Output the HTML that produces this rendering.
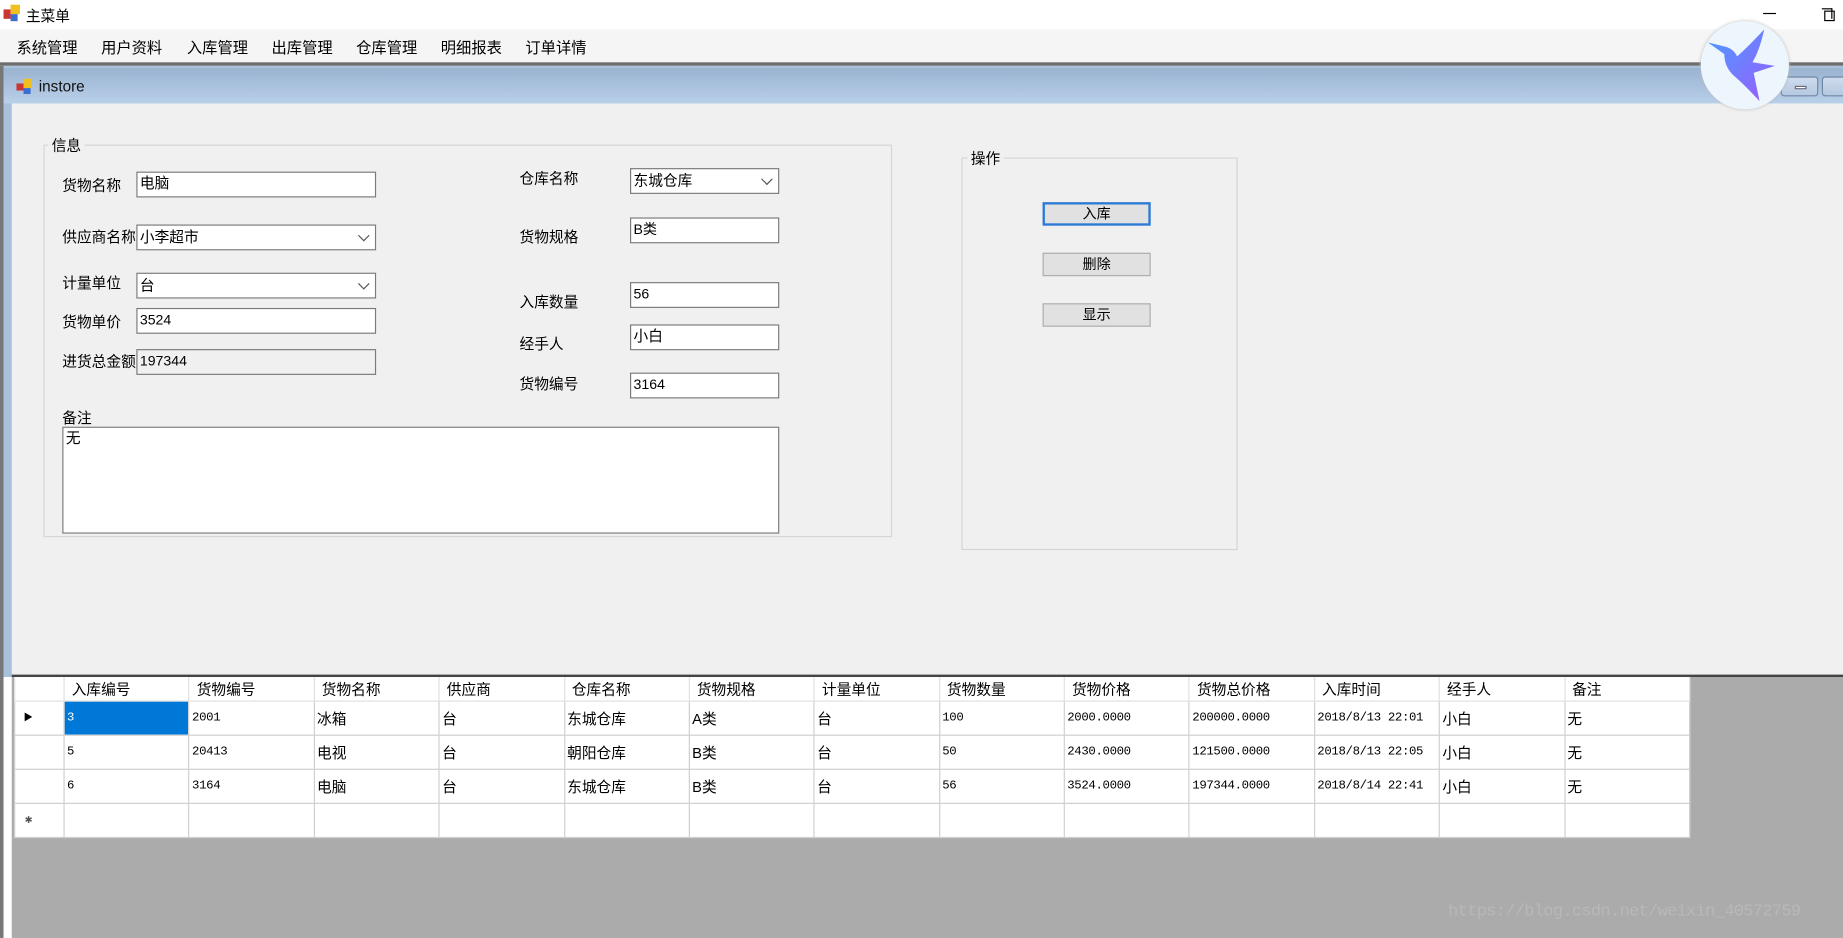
<!DOCTYPE html>
<html><head><meta charset="utf-8"><style>
*{margin:0;padding:0;box-sizing:border-box}
html,body{width:1843px;height:938px;overflow:hidden;background:#fff}
#w{position:absolute;left:0;top:0;width:1568px;height:798px;transform:scale(1.17538);transform-origin:0 0;font-family:"Liberation Sans","Noto Sans CJK SC",sans-serif;font-size:12.5px;color:#000}
.a{position:absolute;white-space:nowrap}
.tb{position:absolute;background:#fff;border:1px solid #7a7a7a;height:22px;font-size:12px;padding:1px 2px;line-height:17px}
.cb{position:absolute;background:#fff;border:1px solid #7a7a7a;height:22px;font-size:12.5px;padding:1px 2px;line-height:18px}
.cb:after{content:"";position:absolute;right:6px;top:5px;width:6px;height:6px;border-right:1px solid #555;border-bottom:1px solid #555;transform:rotate(45deg)}
.gb{position:absolute;border:1px solid #d5d5d5}
.btn{position:absolute;width:92px;height:20px;background:#e1e1e1;border:1px solid #adadad;text-align:center;font-size:12px;line-height:18px}
table{position:absolute;left:12px;top:576px;border-collapse:collapse;background:#fff;table-layout:fixed;width:1425px}
td{border:1px solid #cfcfcf;height:29px;font-size:12.5px;padding-left:2px;vertical-align:middle;white-space:nowrap;overflow:hidden}
tr.h td{height:20px;font-size:12.5px;padding-left:6px;border-top:none;border-color:#e0e0e0}
td.rh{padding:0}
.m{font-family:"Liberation Mono","Noto Sans CJK SC",monospace;font-size:10.5px;letter-spacing:-0.3px}
.mn{position:absolute;top:30px;font-size:13px}
</style></head><body><div id="w">
<div class="a" style="left:3px;top:4px;width:14px;height:14px"><div style="position:absolute;left:0;top:4px;width:6px;height:8px;background:#c33"></div><div style="position:absolute;left:6px;top:0;width:8px;height:8px;background:#f0c020"></div><div style="position:absolute;left:6px;top:8px;width:6px;height:6px;background:#3a6ed0"></div></div>
<div class="a" style="left:22px;top:3px;font-size:12.5px">主菜单</div>
<div class="a" style="left:1500px;top:11px;width:11px;height:1px;background:#000"></div>
<div class="a" style="left:1552px;top:9px;width:9px;height:9px;border:1px solid #000"></div>
<div class="a" style="left:1550px;top:7px;width:9px;height:9px;border-top:1px solid #000;border-right:1px solid #000"></div>
<div class="a" style="left:0;top:25px;width:1568px;height:28px;background:#f5f5f5"></div>
<div class="mn" style="left:14px">系统管理</div>
<div class="mn" style="left:86px">用户资料</div>
<div class="mn" style="left:159px">入库管理</div>
<div class="mn" style="left:231px">出库管理</div>
<div class="mn" style="left:303px">仓库管理</div>
<div class="mn" style="left:375px">明细报表</div>
<div class="mn" style="left:447px">订单详情</div>
<div class="a" style="left:0;top:53px;width:1568px;height:3px;background:#6d6d6d"></div>
<div class="a" style="left:0;top:56px;width:1568px;height:520px;background:#a9c0da"></div>
<div class="a" style="left:0;top:56px;width:3px;height:742px;background:#777"></div>
<div class="a" style="left:3px;top:58px;width:1565px;height:30px;background:linear-gradient(#9ab3d0,#b9d0ea)"></div>
<div class="a" style="left:14px;top:67px;width:14px;height:14px"><div style="position:absolute;left:0;top:4px;width:6px;height:6px;background:#c33"></div><div style="position:absolute;left:6px;top:0;width:7px;height:8px;background:#f0c020"></div><div style="position:absolute;left:6px;top:8px;width:6px;height:5px;background:#3a6ed0"></div></div>
<div class="a" style="left:33px;top:66px;font-size:13px;color:#111">instore</div>
<div class="a" style="left:1515px;top:65px;width:32px;height:17px;border:1px solid #6f88a6;border-radius:3px;background:linear-gradient(#cfdced,#b4c8e0)"><div style="position:absolute;left:11px;top:7px;width:10px;height:3px;background:#fff;border:1px solid #667"></div></div>
<div class="a" style="left:1550px;top:65px;width:30px;height:17px;border:1px solid #6f88a6;border-radius:3px;background:linear-gradient(#cfdced,#b4c8e0)"></div>
<div class="a" style="left:10px;top:88px;width:1558px;height:486px;background:#f0f0f0"></div>
<div class="a" style="left:1447px;top:18px;width:75px;height:75px;border-radius:50%;background:#eef6fd;box-shadow:0 0 3px #bbb"></div>
<svg class="a" style="left:1447px;top:18px" width="75" height="75" viewBox="0 0 75 75"><defs><linearGradient id="g" x1="0" y1="0" x2="1" y2="1"><stop offset="0" stop-color="#4a9cff"/><stop offset="1" stop-color="#9b5cff"/></linearGradient></defs><path d="M6 18 L22 22 Q28 24 31 30 Q42 20 54 7 Q50 25 44 35 L63 38 L45 44 L50 68 Q38 55 30 48 Q20 40 20 28 Z" fill="url(#g)"/></svg>
<div class="gb" style="left:37px;top:123px;width:722px;height:334px"></div>
<div class="a" style="left:41px;top:113px;background:#f0f0f0;padding:0 3px">信息</div>
<div class="a" style="left:53px;top:147px">货物名称</div>
<div class="tb" style="left:116px;top:146px;width:204px;font-size:12.5px">电脑</div>
<div class="a" style="left:53px;top:191px">供应商名称</div>
<div class="cb" style="left:116px;top:191px;width:204px">小李超市</div>
<div class="a" style="left:53px;top:230px">计量单位</div>
<div class="cb" style="left:116px;top:232px;width:204px">台</div>
<div class="a" style="left:53px;top:263px">货物单价</div>
<div class="tb" style="left:116px;top:262px;width:204px">3524</div>
<div class="a" style="left:53px;top:297px">进货总金额</div>
<div class="tb" style="left:116px;top:297px;width:204px;background:#f0f0f0">197344</div>
<div class="a" style="left:53px;top:345px">备注</div>
<div class="tb" style="left:53px;top:363px;width:610px;height:91px;font-size:12.5px">无</div>
<div class="a" style="left:442px;top:141px">仓库名称</div>
<div class="cb" style="left:536px;top:143px;width:127px">东城仓库</div>
<div class="a" style="left:442px;top:191px">货物规格</div>
<div class="tb" style="left:536px;top:185px;width:127px">B类</div>
<div class="a" style="left:442px;top:246px">入库数量</div>
<div class="tb" style="left:536px;top:240px;width:127px">56</div>
<div class="a" style="left:442px;top:282px">经手人</div>
<div class="tb" style="left:536px;top:276px;width:127px;font-size:12.5px">小白</div>
<div class="a" style="left:442px;top:316px">货物编号</div>
<div class="tb" style="left:536px;top:317px;width:127px">3164</div>
<div class="gb" style="left:818px;top:134px;width:235px;height:334px"></div>
<div class="a" style="left:823px;top:124px;background:#f0f0f0;padding:0 3px">操作</div>
<div class="btn" style="left:887px;top:172px;border:2px solid #2a7ad6;line-height:16px">入库</div>
<div class="btn" style="left:887px;top:215px">删除</div>
<div class="btn" style="left:887px;top:258px">显示</div>
<div class="a" style="left:10px;top:574px;width:1558px;height:224px;background:#ababab;border-top:2px solid #444"></div>
<table>
<colgroup><col style="width:42px"><col span="13" style="width:106.38px"></colgroup>
<tr class="h"><td class="rh"></td><td>入库编号</td><td>货物编号</td><td>货物名称</td><td>供应商</td><td>仓库名称</td><td>货物规格</td><td>计量单位</td><td>货物数量</td><td>货物价格</td><td>货物总价格</td><td>入库时间</td><td>经手人</td><td>备注</td></tr>
<tr><td class="rh" style="padding-left:7px;font-size:8px">▶</td><td style="background:#0078d7;color:#fff" class="m">3</td><td class="m">2001</td><td>冰箱</td><td>台</td><td>东城仓库</td><td>A类</td><td>台</td><td class="m">100</td><td class="m">2000.0000</td><td class="m">200000.0000</td><td class="m">2018/8/13 22:01</td><td>小白</td><td>无</td></tr>
<tr><td class="rh"></td><td class="m">5</td><td class="m">20413</td><td>电视</td><td>台</td><td>朝阳仓库</td><td>B类</td><td>台</td><td class="m">50</td><td class="m">2430.0000</td><td class="m">121500.0000</td><td class="m">2018/8/13 22:05</td><td>小白</td><td>无</td></tr>
<tr><td class="rh"></td><td class="m">6</td><td class="m">3164</td><td>电脑</td><td>台</td><td>东城仓库</td><td>B类</td><td>台</td><td class="m">56</td><td class="m">3524.0000</td><td class="m">197344.0000</td><td class="m">2018/8/14 22:41</td><td>小白</td><td>无</td></tr>
<tr><td class="rh" style="padding-left:8px;font-size:8px;color:#555">✱</td><td></td><td></td><td></td><td></td><td></td><td></td><td></td><td></td><td></td><td></td><td></td><td></td><td></td></tr>
</table>
<div class="a" style="left:1232px;top:768px;font-family:'Liberation Mono',monospace;font-size:14.5px;letter-spacing:-0.6px;color:#b8b8b8">https://blog.csdn.net/weixin_40572759</div>
</div></body></html>
